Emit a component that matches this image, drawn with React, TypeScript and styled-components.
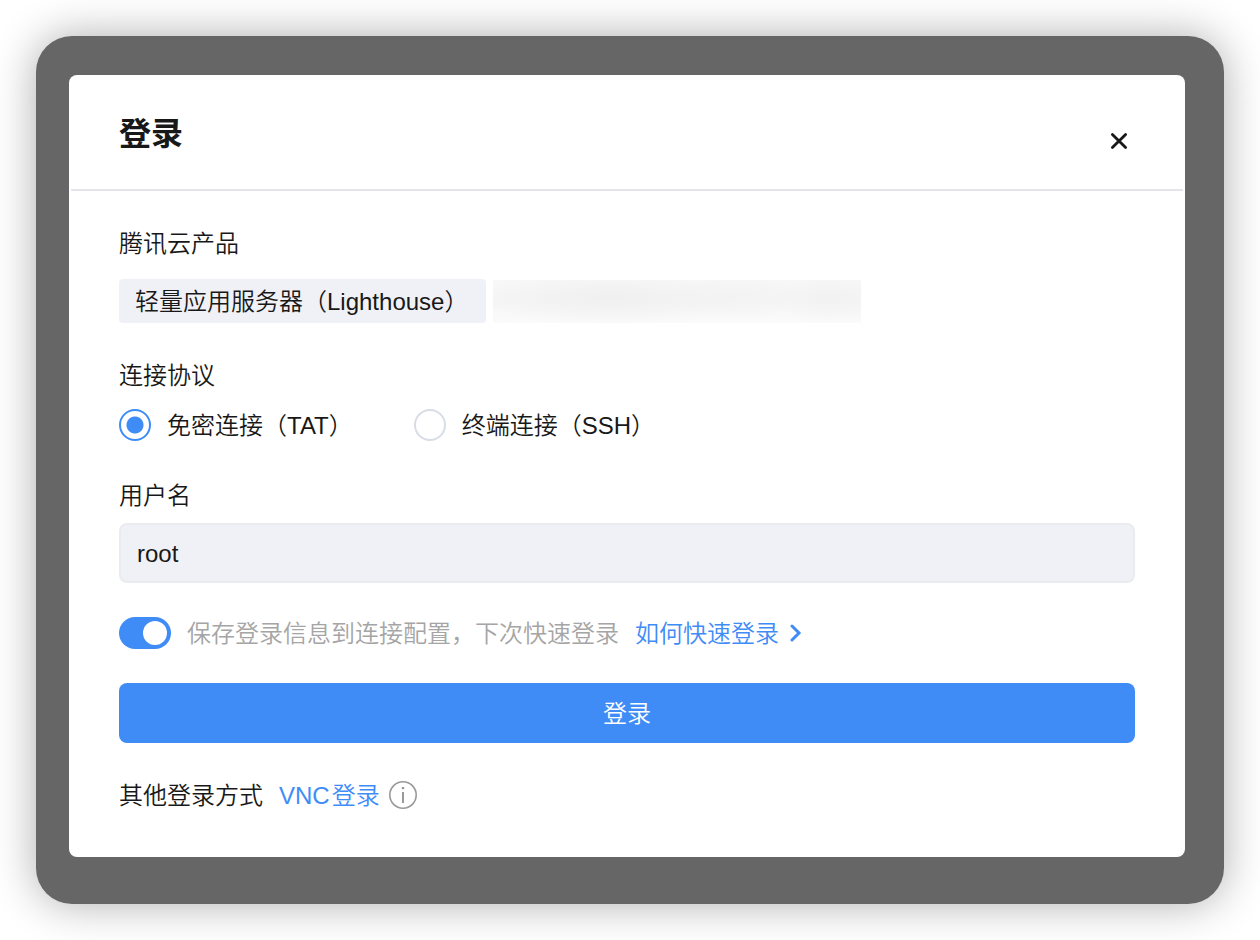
import React, { useState } from "react";
import styled, { createGlobalStyle } from "styled-components";

const GlobalStyle = createGlobalStyle`
  *, *::before, *::after { box-sizing: border-box; }
  body {
    margin: 0;
    background: #fff;
    color: #181818;
    font-family: "Liberation Sans", "Noto Sans CJK SC", sans-serif;
    font-size: 24px;
    font-weight: 350;
    line-height: 36px;
  }
  button, input { font: inherit; color: inherit; }
`;

const Page = styled.main`
  min-height: 100vh;
  padding: 36px;
`;

const Backdrop = styled.div`
  padding: 39px 39px 47px 33px;
  border-radius: 36px;
  background: #666;
  box-shadow: 0 0 44px rgba(0, 0, 0, 0.32);
`;

const Dialog = styled.section`
  border-radius: 8px;
  background: #fff;
`;

const Header = styled.header`
  display: flex;
  align-items: center;
  justify-content: space-between;
  height: 116px;
  margin: 0 2px;
  padding: 4px 47px 0 48px;
  border-bottom: 2px solid #e4e5ea;
`;

const Title = styled.h1`
  margin: 0;
  font-size: 32px;
  font-weight: 700;
  line-height: 48px;
`;

const CloseButton = styled.button`
  display: flex;
  padding: 8px;
  margin-top: 14px;
  border: 0;
  background: none;
  cursor: pointer;
`;

const Form = styled.form`
  display: flex;
  flex-direction: column;
  gap: 34px;
  padding: 35px 50px 44px;
`;

const Fields = styled.div`
  display: flex;
  flex-direction: column;
  gap: 35px;
`;

const Field = styled.div<{ $gap: number }>`
  display: flex;
  flex-direction: column;
  gap: ${(p) => p.$gap}px;
`;

const Row = styled.div<{ $gap: number }>`
  display: flex;
  align-items: center;
  gap: ${(p) => p.$gap}px;
`;

const Footer = styled(Row)`
  height: 36px;
`;

const Caption = styled.span`
  padding-top: 2px;
`;

const Chip = styled.span`
  padding: 5px 18px 3px 16px;
  border-radius: 4px;
  background: #f0f1f6;
`;

const Redacted = styled.span`
  width: 368px;
  height: 43px;
  background:
    radial-gradient(ellipse 130px 28px at 32% 42%, #f0f0f0, transparent),
    radial-gradient(ellipse 70px 24px at 66% 36%, #f3f3f3, transparent),
    radial-gradient(ellipse 60px 26px at 92% 42%, #f2f2f2, transparent),
    linear-gradient(#f8f8f8, #f5f5f5 45%, #fbfbfb);
`;

const RadioLabel = styled.label`
  display: flex;
  align-items: center;
  gap: 16px;
  height: 36px;
  cursor: pointer;
`;

const Radio = styled.input`
  appearance: none;
  width: 32px;
  height: 32px;
  margin: 0;
  border: 2px solid #d8dce5;
  border-radius: 50%;
  background: #fff;
  cursor: pointer;

  &:checked {
    border-color: #3f8cf7;
    background: radial-gradient(circle, #3f8cf7 8px, #fff 9px);
  }
`;

const TextInput = styled.input`
  width: 100%;
  height: 60px;
  padding: 2px 16px 0;
  border: 2px solid #e9ebef;
  border-radius: 8px;
  background: #f0f1f6;
  outline: none;
`;

const SwitchLabel = styled.label`
  display: flex;
  align-items: center;
  gap: 16px;
  height: 32px;
  color: #a5a5a5;
  cursor: pointer;
`;

const Switch = styled.input`
  appearance: none;
  display: flex;
  align-items: center;
  width: 52px;
  height: 32px;
  margin: 0;
  padding: 0 4px;
  border-radius: 16px;
  background: #c5c9d2;
  cursor: pointer;

  &::before {
    content: "";
    width: 24px;
    height: 24px;
    border-radius: 50%;
    background: #fff;
  }

  &:checked {
    justify-content: flex-end;
    background: #3f8cf7;
  }
`;

const Link = styled.a<{ $gap: number }>`
  display: flex;
  align-items: center;
  gap: ${(p) => p.$gap}px;
  height: 32px;
  color: #3f8cf7;
  text-decoration: none;
`;

const SubmitButton = styled.button`
  height: 60px;
  padding: 2px 0 0;
  border: 0;
  border-radius: 8px;
  background: #3f8cf7;
  color: #fff;
  cursor: pointer;
`;

const InfoButton = styled.button`
  display: flex;
  margin-left: -7px;
  padding: 0;
  border: 0;
  background: none;
  cursor: pointer;
`;

function CloseIcon() {
  return (
    <svg width="18" height="18" viewBox="0 0 18 18" fill="none" stroke="#181818" strokeWidth="2.8" strokeLinecap="round" aria-hidden="true">
      <path d="M2.4 2.4 15.6 15.6M15.6 2.4 2.4 15.6" />
    </svg>
  );
}

function ChevronIcon() {
  return (
    <svg width="12" height="18" viewBox="0 0 12 18" fill="none" stroke="#3f8cf7" strokeWidth="3" strokeLinecap="round" strokeLinejoin="miter" aria-hidden="true">
      <path d="M2 2 9 9 2 16" />
    </svg>
  );
}

function InfoIcon() {
  return (
    <svg width="28" height="28" viewBox="0 0 28 28" fill="none" aria-hidden="true">
      <circle cx="14" cy="14" r="13.2" stroke="#999" strokeWidth="1.6" />
      <path d="M12.8 6h2.4v2.2h-2.4z" fill="#999" />
      <path d="M14 11v11" stroke="#999" strokeWidth="2" />
    </svg>
  );
}

const protocols = [
  { value: "tat", label: "免密连接（TAT）" },
  { value: "ssh", label: "终端连接（SSH）" },
];

export default function App() {
  const [protocol, setProtocol] = useState("tat");
  const [username, setUsername] = useState("root");
  const [save, setSave] = useState(true);

  return (
    <Page lang="zh-CN">
      <GlobalStyle />
      <Backdrop>
        <Dialog role="dialog" aria-labelledby="dialog-title">
          <Header>
            <Title id="dialog-title">登录</Title>
            <CloseButton type="button" aria-label="关闭">
              <CloseIcon />
            </CloseButton>
          </Header>
          <Form onSubmit={(e) => e.preventDefault()}>
            <Fields>
              <Field $gap={17}>
                <span>腾讯云产品</span>
                <Row $gap={7}>
                  <Chip>轻量应用服务器（Lighthouse）</Chip>
                  <Redacted />
                </Row>
              </Field>
              <Field $gap={13} role="radiogroup" aria-labelledby="protocol-label">
                <span id="protocol-label">连接协议</span>
                <Row $gap={61}>
                  {protocols.map((item) => (
                    <RadioLabel key={item.value}>
                      <Radio
                        type="radio"
                        name="protocol"
                        value={item.value}
                        checked={protocol === item.value}
                        onChange={() => setProtocol(item.value)}
                      />
                      <Caption>{item.label}</Caption>
                    </RadioLabel>
                  ))}
                </Row>
              </Field>
              <Field $gap={9}>
                <label htmlFor="username">用户名</label>
                <TextInput id="username" value={username} onChange={(e) => setUsername(e.target.value)} />
              </Field>
            </Fields>
            <Row $gap={16}>
              <SwitchLabel>
                <Switch type="checkbox" role="switch" checked={save} onChange={(e) => setSave(e.target.checked)} />
                <Caption>保存登录信息到连接配置，下次快速登录</Caption>
              </SwitchLabel>
              <Link $gap={11} href="#quick-login">
                <Caption>如何快速登录</Caption>
                <ChevronIcon />
              </Link>
            </Row>
            <SubmitButton type="submit">登录</SubmitButton>
            <Footer $gap={16}>
              <Caption>其他登录方式</Caption>
              <Link $gap={2} href="#vnc">
                <Caption>VNC</Caption>
                <Caption>登录</Caption>
              </Link>
              <InfoButton type="button" aria-label="说明">
                <InfoIcon />
              </InfoButton>
            </Footer>
          </Form>
        </Dialog>
      </Backdrop>
    </Page>
  );
}
